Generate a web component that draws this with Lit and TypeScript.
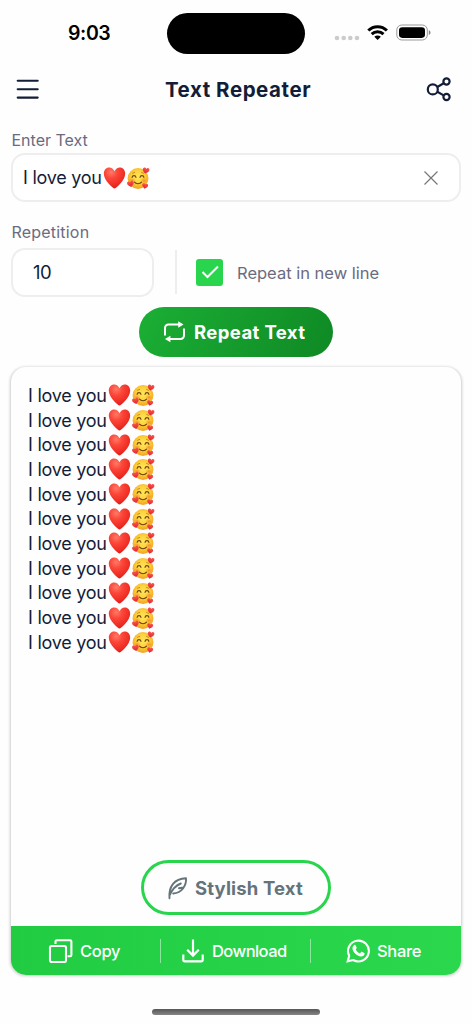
import { LitElement, html, css, svg } from "lit";
import { customElement, property, state } from "lit/decorators.js";

/** Heart and smiling face with hearts, sized relative to a 24px line. */
@customElement("love-emoji")
class LoveEmoji extends LitElement {
  static styles = css`
    :host { display: inline-flex; flex: none; }
    svg { display: block; width: 48px; height: 24px; overflow: visible; }
  `;
  render() {
    const mini = (x: number, y: number, r: number, s: number) => svg`
      <path transform="translate(${x} ${y}) rotate(${r}) scale(${s})" fill="url(#m)"
        d="M0 3.4C-2 2-3.7.6-3.7-1.1-3.7-3.5-.9-4 0-1.9.9-4 3.7-3.5 3.7-1.1 3.7.6 2 2 0 3.4Z"/>`;
    return html`<svg viewBox="0 0 48 24" role="img" aria-label="❤️🥰">
      <defs>
        <radialGradient id="h" cx=".35" cy=".22" r=".85">
          <stop offset="0" stop-color="#ff7a68"/><stop offset=".35" stop-color="#fb4638"/>
          <stop offset=".75" stop-color="#ee2b23"/><stop offset="1" stop-color="#d41716"/>
        </radialGradient>
        <radialGradient id="f" cx=".5" cy=".42" r=".58">
          <stop offset="0" stop-color="#ffe65a"/><stop offset=".55" stop-color="#fdd03b"/>
          <stop offset="1" stop-color="#f3a01f"/>
        </radialGradient>
        <radialGradient id="b"><stop offset="0" stop-color="#f5712b" stop-opacity=".65"/><stop offset="1" stop-color="#f5712b" stop-opacity="0"/></radialGradient>
        <linearGradient id="m" x2="0" y2="1"><stop offset="0" stop-color="#f9564e"/><stop offset="1" stop-color="#df2430"/></linearGradient>
      </defs>
      <path fill="url(#h)" d="M11.500 22.600C10.500 22.600.8 14.600.8 7.800.8 4.300 3 1.600 6.200 1.600c2.400 0 4.300 1.400 5.300 3.700 1.100-2.300 3-3.700 5.300-3.700 3.200 0 5.400 2.700 5.400 6.200 0 6.800-9.700 14.800-10.700 14.800Z"/>
      <circle cx="35" cy="12.500" r="10.400" fill="url(#f)"/>
      <ellipse cx="29.100" cy="14.500" rx="3.500" ry="2.800" fill="url(#b)"/>
      <ellipse cx="40.900" cy="14.500" rx="3.500" ry="2.800" fill="url(#b)"/>
      <g fill="none" stroke="#6b4312" stroke-linecap="round" stroke-width="1.150">
        <path d="M29.100 11.300c.4-2.300 3.400-2.300 3.900 0M37 11.300c.5-2.300 3.500-2.300 3.900 0M31.500 16.200c1.500 2 5.500 2 7 0"/>
        <path stroke-width=".7" stroke="#a8741c" d="M29.500 7.300l2.200-.9M38.500 6.400l2.100.9"/>
      </g>
      ${mini(42.900, 4.600, 12, 0.900)} ${mini(27.600, 18, -12, 0.900)} ${mini(42, 20, 12, 0.800)}
    </svg>`;
  }
}

@customElement("app-root")
class AppRoot extends LitElement {
  @property() text = "I love you";
  @state() private lines = 11;

  static styles = css`
    :host {
      display: flex; flex-direction: column; box-sizing: border-box;
      width: 472px; height: 1024px; overflow: hidden; background: #fefefe; color: #141d37;
      font-family: Inter, "Liberation Sans", sans-serif; white-space: nowrap;
    }
    * { box-sizing: border-box; }
    svg { display: block; flex: none; fill: none; }
    .status { display: flex; align-items: center; height: 66px; padding-left: 68px; color: #000; }
    .time { width: 99px; font-size: 19.500px; font-weight: 600; letter-spacing: -.4px; }
    .island { width: 138px; height: 41px; border-radius: 21px; background: #000; }
    .signals { margin-left: 29px; }
    .head { display: flex; align-items: center; justify-content: space-between; height: 46px; padding: 0 20px 0 16px; }
    .title { margin-left: 10px; font-size: 20.500px; font-weight: 700; letter-spacing: .55px; }
    .form { display: flex; flex-direction: column; padding: 0 11px; }
    .label { height: 24px; line-height: 24px; margin-top: 16px; padding-left: .5px; color: #6b6b80; font-size: 16px; letter-spacing: 0; }
    .field { display: flex; align-items: center; height: 49px; border: 2px solid #eee; border-radius: 14px; background: #fff; font-size: 18px; }
    .entry { margin-top: 1px; padding: 0 21px 0 10px; }
    .entry span, .line span { letter-spacing: -.25px; width: 80px; flex: none; }
    .close { margin-left: auto; }
    .label.second { margin-top: 18px; letter-spacing: .2px; }
    .row { display: flex; align-items: center; margin-top: 3px; height: 50px; }
    .count { width: 143px; padding-left: 20px; font-size: 18.500px; letter-spacing: -.6px; }
    .rule { width: 1.500px; height: 44px; margin: 0 19.500px 0 21px; background: #eee; }
    .check { display: flex; align-items: center; justify-content: center; width: 27px; height: 27px; border-radius: 3px; background: #29d54c; }
    .option { margin-left: 14px; padding-top: 1px; color: #6b6b80; font-size: 16.500px; letter-spacing: 0; }
    .repeat { display: flex; align-items: center; align-self: center; width: 194px; height: 50px; margin-top: 10px; padding-left: 24px; gap: 8px; border-radius: 25px; background: linear-gradient(115deg, #1baf35, #0f8924); color: #fff; font-size: 18.500px; font-weight: 700; letter-spacing: .4px; }
    .card { display: flex; flex-direction: column; height: 608px; margin: 10px 11px 0; border-radius: 15px; background: #fefefe; box-shadow: 0 .5px 3px .5px #0003; overflow: hidden; }
    .lines { display: flex; flex-direction: column; flex: 1; padding: 16px 0 0 17px; font-size: 18px; }
    .line { display: flex; align-items: center; height: 24.700px; }
    .style { display: flex; align-items: center; align-self: center; width: 190px; height: 55px; margin-bottom: 11px; padding-left: 23px; gap: 6px; border: 3px solid #29d54c; border-radius: 28px; color: #65737b; font-size: 18.500px; font-weight: 700; letter-spacing: .15px; }
    .actions { display: flex; align-items: center; height: 49px; background: linear-gradient(90deg, #21cc42, #2bd84d); color: #fff; font-size: 16.500px; font-weight: 500; letter-spacing: -.3px; }
    .action { display: flex; align-items: center; height: 24px; gap: 7px; }
    .copy { width: 149px; padding-left: 37px; }
    .download { width: 151px; padding-left: 21px; gap: 8px; letter-spacing: -.55px; border-left: 1px solid #fff7; border-right: 1px solid #fff7; }
    .share { padding-left: 35px; }
    .home { width: 168px; height: 6px; margin: 34px 0 0 152px; border-radius: 3px; background: linear-gradient(#565656, #858585); }
  `;

  render() {
    return html`
      <div class="status">
        <span class="time">9:03</span>
        <div class="island"></div>
        <svg class="signals" width="102" height="24" viewBox="334 20.500 102 24">
          <g fill="#ccc"><circle cx="337" cy="37.500" r="2.300"/><circle cx="343.700" cy="37.500" r="2.300"/><circle cx="350.300" cy="37.500" r="2.300"/><circle cx="357" cy="37.500" r="2.300"/></g>
          <path stroke="#000" stroke-width="3" d="M368.300 30c5.200-5.100 13.400-5.100 18.600 0M371.700 33.600c3.300-3.200 8.500-3.200 11.800 0"/>
          <path fill="#000" d="M374.300 36.200c1.900-1.700 4.700-1.700 6.600 0l-3.300 3.400Z"/>
          <rect x="396.800" y="24.500" width="30.500" height="15" rx="5" stroke="#999"/>
          <rect x="399" y="26.700" width="26" height="10.700" rx="3.300" fill="#000"/>
          <path fill="#888" d="M428.800 29.700c2.300.7 2.300 4 0 4.700Z"/>
        </svg>
      </div>
      <div class="head">
        <svg width="24" height="24" viewBox="0.300 0 24 24" stroke="#141d37" stroke-width="2.100" stroke-linecap="round"><path d="M2 3.800h20M2 12.200h20M2 20.600h20"/></svg>
        <span class="title">Text Repeater</span>
        <svg width="26" height="26" viewBox="426 76 26 26" stroke="#141d37" stroke-width="2.200"><circle cx="432.800" cy="89.400" r="5"/><circle cx="446.500" cy="81.500" r="3.100"/><circle cx="446.500" cy="97" r="3.100"/><path d="M437.300 87l6.400-3.800M437.300 91.800l6.400 3.600"/></svg>
      </div>
      <div class="form">
        <div class="label">Enter Text</div>
        <div class="field entry">
          <span>${this.text}</span><love-emoji></love-emoji>
          <svg class="close" width="14" height="14" viewBox="0 0 14 14" stroke="#777" stroke-width="1.200"><path d="M.5.5l13 13M13.500.5l-13 13"/></svg>
        </div>
        <div class="label second">Repetition</div>
        <div class="row">
          <div class="field count">10</div>
          <div class="rule"></div>
          <div class="check"><svg width="18" height="14" viewBox="0 0 18 14" stroke="#fff" stroke-width="2"><path d="M1.500 7l5 5L17 1.500"/></svg></div>
          <span class="option">Repeat in new line</span>
        </div>
        <div class="repeat">
          <svg width="23" height="22" viewBox="0 0 23 22" stroke="#fff" stroke-width="2"><path d="M2 14.500V7a3.500 3.500 0 0 1 3.500-3.500H16M21 7.500v7a3.500 3.500 0 0 1-3.500 3.500H6"/><path fill="#fff" stroke="none" d="M15.200.3l5.300 3.200-5.300 3.200ZM7.400 14.800L2 18l5.400 3.200Z"/></svg>
          <span class="repeat-text">Repeat Text</span>
        </div>
      </div>
      <div class="card">
        <div class="lines">
          ${Array.from({ length: this.lines }, () => html`<div class="line"><span>${this.text}</span><love-emoji></love-emoji></div>`)}
        </div>
        <div class="style">
          <svg width="22" height="24" viewBox="0 0 22 24" stroke="#65737b" stroke-width="1.900" stroke-linecap="round" stroke-linejoin="round"><path d="M2.500 22.200C1.500 11 7 2.500 19 2.200c.6 7-3.800 14.600-12.800 15.300M2.700 19C5 14 8.500 9.500 13.800 7.500M12 12.300l4.500-.8"/></svg>
          <span>Stylish Text</span>
        </div>
        <div class="actions">
          <div class="action copy">
            <svg width="25" height="24" viewBox="0 0 25 24" stroke="#fff" stroke-width="2.100" stroke-linejoin="round"><rect x="2" y="7" width="16" height="16" rx="1.500"/><path d="M7.500 5V2.700C7.500 1.800 8 1.300 8.800 1.300h13.300c.8 0 1.300.5 1.300 1.300v13.300c0 .8-.5 1.300-1.300 1.300h-2.500"/></svg>
            <span>Copy</span>
          </div>
          <div class="action download">
            <svg width="22" height="24" viewBox="0 0 22 24" stroke="#fff" stroke-width="2.200"><path d="M11 .5v15.500M5.200 10.800L11 16.600l5.800-5.800M1.300 15.500v5.200c0 1 .6 1.600 1.600 1.600h16.200c1 0 1.600-.6 1.600-1.600v-5.200"/></svg>
            <span>Download</span>
          </div>
          <div class="action share">
            <svg width="24" height="24" viewBox="0 0 24 24"><path stroke="#fff" stroke-width="2.100" d="M1.700 22.300l1.500-5.500A10.400 10.400 0 1 1 7.200 21Z"/><path fill="#fff" d="M8 6.200c.6-.6 1.400-.4 1.700.3l.9 2c.2.500 0 .9-.9 2 1.100 2 2.400 3.100 4.200 3.900l1.200-1.400c.3-.3.600-.3.900-.2l2.200 1.100c.5.3.4 1 .2 1.700-.5 1.400-2.300 2.200-4 1.800-4.100-1-7.400-4.200-7.900-7.600-.2-1.400.5-2.700 1.500-3.600Z"/></svg>
            <span>Share</span>
          </div>
        </div>
      </div>
      <div class="home"></div>
    `;
  }
}
